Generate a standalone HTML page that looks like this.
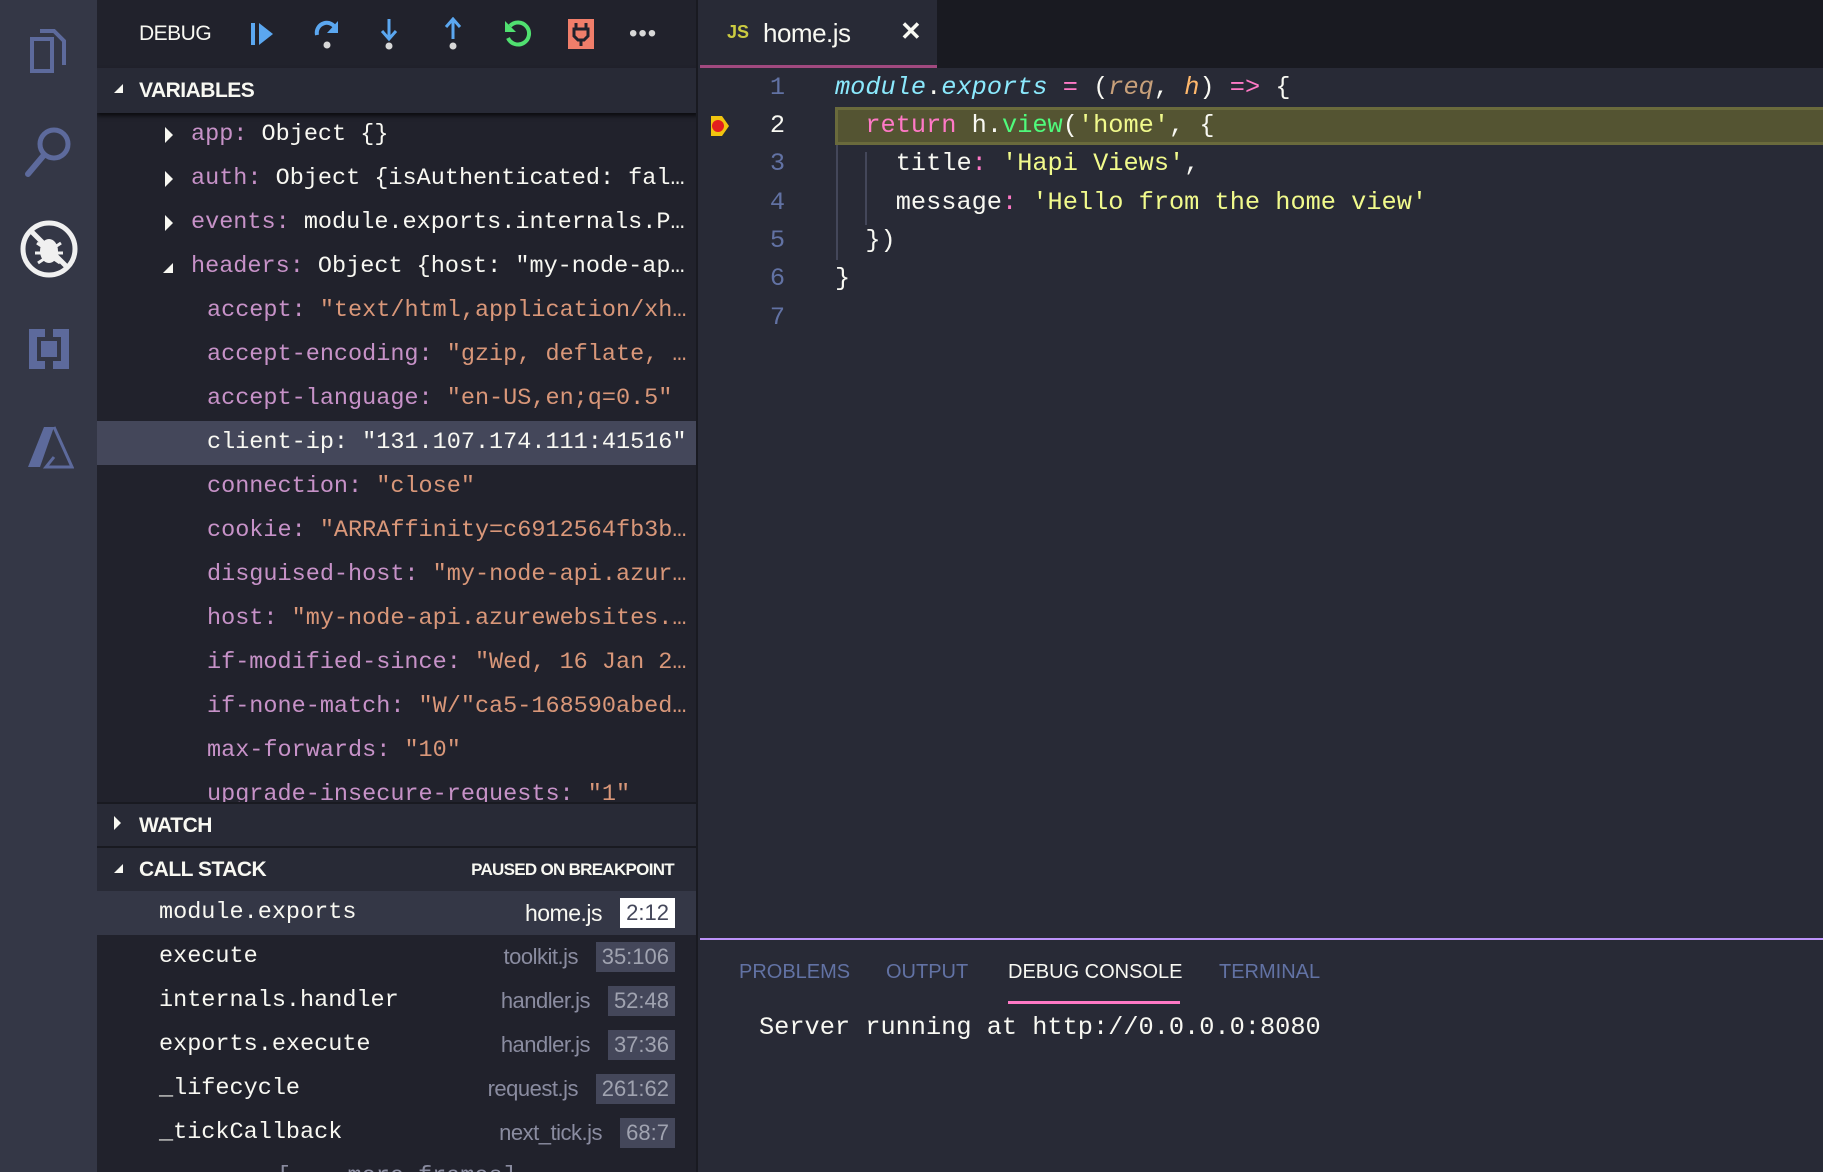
<!DOCTYPE html>
<html style="overflow:hidden;width:1823px;height:1172px"><head><meta charset="utf-8"><style>
*{margin:0;padding:0;box-sizing:border-box}
body{width:1823px;height:1172px;overflow:hidden;background:#282a36;font-family:"Liberation Sans",sans-serif;position:relative}
.abs{position:absolute}
.act{left:0;top:0;width:97px;height:1172px;background:#343746}
.side{left:97px;top:0;width:601px;height:1172px;background:#21222c;border-right:2px solid #191a21;overflow:hidden}
.mono{font-family:"Liberation Mono",monospace;white-space:pre}
.row{position:absolute;left:0;width:601px;height:44px;line-height:44px;font-size:23.5px;color:#f8f8f2}
.n{color:#c792c8}.s{color:#d99779}
.hdr{position:absolute;left:0;width:601px;height:44px;line-height:44px;background:#282a36;color:#f8f8f2;font-weight:bold;font-size:21px;letter-spacing:-0.5px}
.tri{display:inline-block;width:0;height:0}
.code{position:absolute;left:835px;height:38px;line-height:38px;font-size:25.3px;color:#f8f8f2}
.ln{position:absolute;left:740px;width:45px;text-align:right;height:38px;line-height:38px;font-size:25.3px;color:#6272a4}
.ptab{position:absolute;top:961px;font-size:20px;color:#6272a4}
.badge{position:absolute;height:30px;line-height:30px;top:7px;padding:0 6px;background:#44475a;color:#a0a3b0;font-size:22px}
.file{position:absolute;color:#8a8ca0;font-size:22px;letter-spacing:-0.5px}
</style></head><body>
<div class="abs act">
 <svg class="abs" style="left:26px;top:27px" width="44" height="48" viewBox="0 0 44 48"><path d="M14 4h14l10 10v24" fill="none" stroke="#5d6a9c" stroke-width="4"/><path d="M6 12h20v32H6z" fill="none" stroke="#5d6a9c" stroke-width="4"/></svg>
 <svg class="abs" style="left:24px;top:124px" width="50" height="54" viewBox="0 0 50 54"><circle cx="30" cy="20" r="14" fill="none" stroke="#5d6a9c" stroke-width="5"/><path d="M20 31L4 50" stroke="#5d6a9c" stroke-width="6" stroke-linecap="round"/></svg>
 <svg class="abs" style="left:19px;top:219px" width="60" height="60" viewBox="0 0 60 60"><circle cx="30" cy="30" r="26" fill="none" stroke="#f0f0f0" stroke-width="5"/><path d="M13 13L47 47" stroke="#f0f0f0" stroke-width="5"/><ellipse cx="30" cy="32" rx="9" ry="12" fill="#f0f0f0"/><path d="M18 24l6 4M42 24l-6 4M16 34h6M44 34h-6M19 44l6-4M41 44l-6-4" stroke="#f0f0f0" stroke-width="3"/></svg>
 <svg class="abs" style="left:26px;top:326px" width="46" height="46" viewBox="0 0 46 46"><path d="M3 3h16v8H11v24h8v8H3zM27 3h16v40H27v-8h8V11h-8z" fill="#5d6a9c"/><rect x="15" y="15" width="16" height="16" fill="#5d6a9c"/></svg>
 <svg class="abs" style="left:26px;top:425px" width="48" height="44" viewBox="0 0 48 44"><path d="M18 2h10L14 42H2z" fill="#5d6a9c"/><path d="M28 2l18 40H20l8-10" fill="none" stroke="#5d6a9c" stroke-width="3"/></svg>
</div>
<div class="abs side">
 <div class="abs" style="left:0;top:0;width:601px;height:68px;background:#21222c"></div>
 <div class="abs" style="left:42px;top:22px;font-size:21px;color:#f8f8f2;letter-spacing:-0.5px">DEBUG</div>
 <svg class="abs" style="left:152px;top:20px" width="26" height="28" viewBox="0 0 26 28"><rect x="2" y="3" width="4" height="22" fill="#5ba7f0"/><path d="M10 3l14 11-14 11z" fill="#5ba7f0"/></svg>
 <svg class="abs" style="left:215px;top:17px" width="30" height="34" viewBox="0 0 30 34"><path d="M5 18A10 10 0 0 1 24 12" fill="none" stroke="#5ba7f0" stroke-width="4"/><path d="M26 4v12H15z" fill="#5ba7f0"/><circle cx="15" cy="28" r="3.5" fill="#d8d8d8"/></svg>
 <svg class="abs" style="left:282px;top:17px" width="20" height="34" viewBox="0 0 20 34"><path d="M10 2v18" stroke="#5ba7f0" stroke-width="3"/><path d="M3 14l7 8 7-8" fill="none" stroke="#5ba7f0" stroke-width="3"/><circle cx="10" cy="29" r="3.5" fill="#d8d8d8"/></svg>
 <svg class="abs" style="left:346px;top:17px" width="20" height="34" viewBox="0 0 20 34"><path d="M10 4v18" stroke="#5ba7f0" stroke-width="3"/><path d="M3 10l7-8 7 8" fill="none" stroke="#5ba7f0" stroke-width="3"/><circle cx="10" cy="29" r="3.5" fill="#d8d8d8"/></svg>
 <svg class="abs" style="left:405px;top:18px" width="32" height="32" viewBox="0 0 32 32"><path d="M8 8A11 11 0 1 1 6 20" fill="none" stroke="#50e070" stroke-width="4"/><path d="M3 3v11h11z" fill="#50e070"/></svg>
 <svg class="abs" style="left:470px;top:18px" width="28" height="32" viewBox="0 0 28 32"><rect x="1" y="1" width="26" height="30" fill="#f07e6a"/><path d="M9 5v6M19 5v6M7 11h14v7l-4 4h-6l-4-4zM14 22v6" stroke="#21222c" stroke-width="3" fill="none"/></svg>
 <div class="abs" style="left:532px;top:20px;font-size:24px;color:#d8d8d8;letter-spacing:1px">•••</div>

 <div class="hdr" style="top:68px;height:45px;line-height:45px;box-shadow:0 3px 4px #000a"><span class="tri" style="position:absolute;left:17px;top:16px;border-left:9px solid transparent;border-bottom:9px solid #f8f8f2"></span><span style="position:absolute;left:42px">VARIABLES</span></div>

 <div class="abs" style="left:0;top:113px;width:601px;height:689px;overflow:hidden">
  <div class="row mono" style="top:0"><span style="position:absolute;left:68px;top:14px;width:0;height:0;border-top:8px solid transparent;border-bottom:8px solid transparent;border-left:8px solid #f8f8f2"></span><span style="position:absolute;left:94px"><span class="n">app:</span> Object {}</span></div>
  <div class="row mono" style="top:44px"><span style="position:absolute;left:68px;top:14px;width:0;height:0;border-top:8px solid transparent;border-bottom:8px solid transparent;border-left:8px solid #f8f8f2"></span><span style="position:absolute;left:94px"><span class="n">auth:</span> Object {isAuthenticated: fal…</span></div>
  <div class="row mono" style="top:88px"><span style="position:absolute;left:68px;top:14px;width:0;height:0;border-top:8px solid transparent;border-bottom:8px solid transparent;border-left:8px solid #f8f8f2"></span><span style="position:absolute;left:94px"><span class="n">events:</span> module.exports.internals.P…</span></div>
  <div class="row mono" style="top:132px"><span style="position:absolute;left:66px;top:18px;width:0;height:0;border-left:10px solid transparent;border-bottom:10px solid #f8f8f2"></span><span style="position:absolute;left:94px"><span class="n">headers:</span> Object {host: "my-node-ap…</span></div>
  <div class="row mono" style="top:176px"><span style="position:absolute;left:110px"><span class="n">accept:</span> <span class="s">"text/html,application/xh…</span></span></div>
  <div class="row mono" style="top:220px"><span style="position:absolute;left:110px"><span class="n">accept-encoding:</span> <span class="s">"gzip, deflate, …</span></span></div>
  <div class="row mono" style="top:264px"><span style="position:absolute;left:110px"><span class="n">accept-language:</span> <span class="s">"en-US,en;q=0.5"</span></span></div>
  <div class="row mono" style="top:308px;background:#44475a"><span style="position:absolute;left:110px">client-ip: "131.107.174.111:41516"</span></div>
  <div class="row mono" style="top:352px"><span style="position:absolute;left:110px"><span class="n">connection:</span> <span class="s">"close"</span></span></div>
  <div class="row mono" style="top:396px"><span style="position:absolute;left:110px"><span class="n">cookie:</span> <span class="s">"ARRAffinity=c6912564fb3b…</span></span></div>
  <div class="row mono" style="top:440px"><span style="position:absolute;left:110px"><span class="n">disguised-host:</span> <span class="s">"my-node-api.azur…</span></span></div>
  <div class="row mono" style="top:484px"><span style="position:absolute;left:110px"><span class="n">host:</span> <span class="s">"my-node-api.azurewebsites.…</span></span></div>
  <div class="row mono" style="top:528px"><span style="position:absolute;left:110px"><span class="n">if-modified-since:</span> <span class="s">"Wed, 16 Jan 2…</span></span></div>
  <div class="row mono" style="top:572px"><span style="position:absolute;left:110px"><span class="n">if-none-match:</span> <span class="s">"W/"ca5-168590abed…</span></span></div>
  <div class="row mono" style="top:616px"><span style="position:absolute;left:110px"><span class="n">max-forwards:</span> <span class="s">"10"</span></span></div>
  <div class="row mono" style="top:660px"><span style="position:absolute;left:110px"><span class="n">upgrade-insecure-requests:</span> <span class="s">"1"</span></span></div>
 </div>

 <div class="hdr" style="top:802px;border-top:2px solid #191a21"><span class="tri" style="position:absolute;left:17px;top:12px;border-top:7px solid transparent;border-bottom:7px solid transparent;border-left:7px solid #f8f8f2"></span><span style="position:absolute;left:42px">WATCH</span></div>
 <div class="hdr" style="top:846px;border-top:2px solid #191a21;height:45px"><span class="tri" style="position:absolute;left:17px;top:16px;border-left:9px solid transparent;border-bottom:9px solid #f8f8f2"></span><span style="position:absolute;left:42px">CALL STACK</span><span style="position:absolute;right:24px;font-size:17px;letter-spacing:-0.7px">PAUSED ON BREAKPOINT</span></div>

 <div class="row mono" style="top:891px;background:#343746"><span style="position:absolute;left:62px">module.exports</span><span class="file" style="right:96px;color:#f8f8f2;font-family:'Liberation Sans',sans-serif;font-size:23px">home.js</span><span class="badge" style="right:23px;background:#fff;color:#44475a;font-family:'Liberation Sans',sans-serif">2:12</span></div>
 <div class="row mono" style="top:935px"><span style="position:absolute;left:62px">execute</span><span class="file" style="right:120px;font-family:'Liberation Sans',sans-serif">toolkit.js</span><span class="badge" style="right:23px;font-family:'Liberation Sans',sans-serif">35:106</span></div>
 <div class="row mono" style="top:979px"><span style="position:absolute;left:62px">internals.handler</span><span class="file" style="right:108px;font-family:'Liberation Sans',sans-serif">handler.js</span><span class="badge" style="right:23px;font-family:'Liberation Sans',sans-serif">52:48</span></div>
 <div class="row mono" style="top:1023px"><span style="position:absolute;left:62px">exports.execute</span><span class="file" style="right:108px;font-family:'Liberation Sans',sans-serif">handler.js</span><span class="badge" style="right:23px;font-family:'Liberation Sans',sans-serif">37:36</span></div>
 <div class="row mono" style="top:1067px"><span style="position:absolute;left:62px">_lifecycle</span><span class="file" style="right:120px;font-family:'Liberation Sans',sans-serif">request.js</span><span class="badge" style="right:23px;font-family:'Liberation Sans',sans-serif">261:62</span></div>
 <div class="row mono" style="top:1111px"><span style="position:absolute;left:62px">_tickCallback</span><span class="file" style="right:96px;font-family:'Liberation Sans',sans-serif">next_tick.js</span><span class="badge" style="right:23px;font-family:'Liberation Sans',sans-serif">68:7</span></div>
 <div class="row mono" style="top:1155px"><span style="position:absolute;left:180px;color:#8a8ca0">[... more frames]</span></div>
</div>

<!-- editor -->
<div class="abs" style="left:700px;top:0;width:1123px;height:68px;background:#191a21"></div>
<div class="abs" style="left:700px;top:0;width:237px;height:68px;background:#282a36;border-bottom:3px solid #a1497f"></div>
<div class="abs" style="left:727px;top:22px;font-size:18px;font-weight:bold;color:#cbcb41">JS</div>
<div class="abs" style="left:763px;top:18px;font-size:26px;color:#f8f8f2;letter-spacing:-0.5px">home.js</div>
<div class="abs" style="left:900px;top:16px;font-size:26px;color:#f8f8f2;font-weight:bold">✕</div>

<div class="abs" style="left:835px;top:107px;width:988px;height:38px;background:#545432;border:3px solid #6a6a3c;border-right:none"></div>
<div class="abs" style="left:836px;top:145px;width:2px;height:115px;background:#44475a"></div>
<div class="abs" style="left:865px;top:152px;width:2px;height:73px;background:#44475a"></div>
<svg class="abs" style="left:710px;top:115px" width="20" height="22" viewBox="0 0 20 22"><path d="M1 1h11l7 10-7 10H1z" fill="#f1c40f"/><circle cx="8" cy="11" r="6" fill="#e31e1e"/></svg>

<div class="ln mono" style="top:69px">1</div>
<div class="ln mono" style="top:107px;color:#f8f8f2">2</div>
<div class="ln mono" style="top:145px">3</div>
<div class="ln mono" style="top:184px">4</div>
<div class="ln mono" style="top:222px">5</div>
<div class="ln mono" style="top:260px">6</div>
<div class="ln mono" style="top:299px">7</div>

<div class="code mono" style="top:69px"><i style="color:#8be9fd">module</i>.<i style="color:#8be9fd">exports</i> <span style="color:#ff79c6">=</span> (<i style="color:#c8a07a">req</i>, <i style="color:#ffb86c">h</i>) <span style="color:#ff79c6">=&gt;</span> {</div>
<div class="code mono" style="top:107px">  <span style="color:#ff79c6">return</span> h.<span style="color:#50fa7b">view</span>(<span style="color:#f1fa8c">'home'</span>, {</div>
<div class="code mono" style="top:145px">    title<span style="color:#ff79c6">:</span> <span style="color:#f1fa8c">'Hapi Views'</span>,</div>
<div class="code mono" style="top:184px">    message<span style="color:#ff79c6">:</span> <span style="color:#f1fa8c">'Hello from the home view'</span></div>
<div class="code mono" style="top:222px">  })</div>
<div class="code mono" style="top:260px">}</div>

<!-- panel -->
<div class="abs" style="left:700px;top:938px;width:1123px;height:234px;background:#282a36;border-top:2px solid #bd93f9"></div>
<div class="ptab" style="left:739px">PROBLEMS</div>
<div class="ptab" style="left:886px">OUTPUT</div>
<div class="ptab" style="left:1008px;color:#f8f8f2">DEBUG CONSOLE</div>
<div class="abs" style="left:1008px;top:1001px;width:172px;height:3px;background:#ff79c6"></div>
<div class="ptab" style="left:1219px">TERMINAL</div>
<div class="abs mono" style="left:759px;top:1013px;font-size:25.3px;color:#f8f8f2">Server running at http://0.0.0.0:8080</div>
</body></html>
